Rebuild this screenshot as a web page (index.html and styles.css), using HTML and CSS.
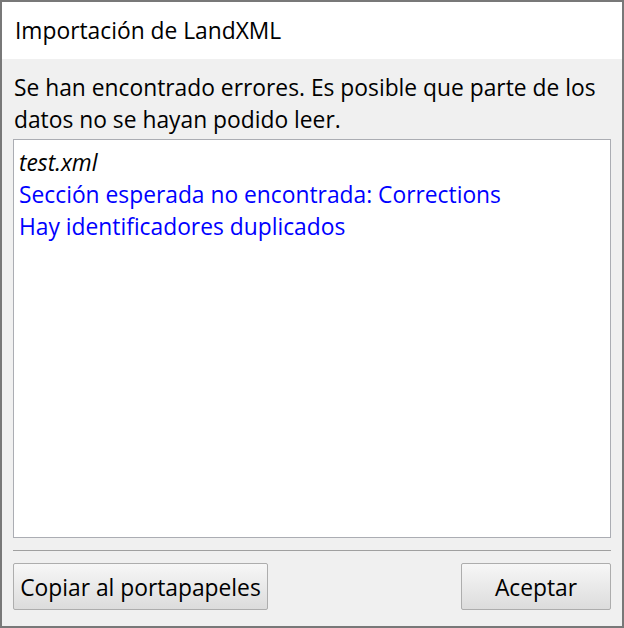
FILE: index.html
```html
<!DOCTYPE html>
<html lang="es">
<head>
<meta charset="utf-8">
<title>Importación de LandXML</title>
<link rel="stylesheet" href="styles.css">
</head>
<body>
<div class="window">
  <div class="header"><span class="title">Importación de LandXML</span></div>
  <div class="content">
    <p class="message">Se han encontrado errores. Es posible que parte de los datos no se hayan podido leer.</p>
    <div class="listbox">
      <div class="item file">test.xml</div>
      <div class="item error">Sección esperada no encontrada: Corrections</div>
      <div class="item error">Hay identificadores duplicados</div>
    </div>
    <div class="separator"></div>
    <div class="buttons">
      <button class="btn btn-copy">Copiar al portapapeles</button>
      <button class="btn btn-ok">Aceptar</button>
    </div>
  </div>
</div>
</body>
</html>
```
FILE: styles.css
```css
html, body {
  margin: 0;
  padding: 0;
  background: #ffffff;
}
body {
  font-family: "Open Sans", "Noto Sans", sans-serif;
  font-size: 22.8px;
  color: #000000;
}
.window {
  width: 624px;
  height: 628px;
  box-sizing: border-box;
  border: 2px solid #787878;
  background: #f0f0f0;
  display: flex;
  flex-direction: column;
}
.header {
  height: 57px;
  background: #ffffff;
  display: flex;
  align-items: center;
  padding-left: 13px;
  flex: none;
}
.title {
  line-height: 32px;
}
.content {
  flex: 1;
  display: flex;
  flex-direction: column;
  padding: 13px 11px 16px 11px;
}
.message {
  margin: 0 0 3px 0;
  padding-left: 1px;
  line-height: 32px;
}
.listbox {
  height: 399px;
  box-sizing: border-box;
  border: 1px solid #abadb3;
  background: #ffffff;
  padding: 7px 5px;
  flex: none;
}
.item {
  line-height: 32px;
  white-space: nowrap;
}
.file {
  font-style: italic;
}
.error {
  color: #0000ff;
}
.separator {
  height: 1px;
  background: #a0a0a0;
  margin-top: 12px;
  flex: none;
}
.buttons {
  margin-top: 12px;
  display: flex;
  justify-content: space-between;
}
.btn {
  height: 47px;
  font-family: inherit;
  font-size: 22.8px;
  color: #000000;
  border: 1px solid #adadad;
  border-radius: 2px;
  background: linear-gradient(#f7f7f7, #dcdcdc);
  padding: 2px 0 0 0;
}
.btn-copy {
  width: 255px;
}
.btn-ok {
  width: 150px;
}
```
